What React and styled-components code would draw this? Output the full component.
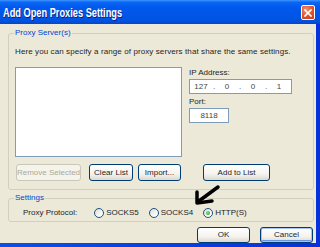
import React from 'react';
import styled, { createGlobalStyle } from 'styled-components';

const Global = createGlobalStyle`
  html, body { margin: 0; padding: 0; width: 320px; height: 247px; overflow: hidden; background: #0A3FD6; }
  #root { width: 320px; height: 247px; }
`;

const Window = styled.div`
  position: relative;
  width: 320px;
  height: 247px;
  display: flex;
  flex-direction: column;
  background: linear-gradient(90deg, #0B4FE6, #0831D9);
  font-family: "Liberation Sans", Arial, sans-serif;
  font-size: 8px;
  color: #1E1E1E;
`;

const TitleBar = styled.div`
  height: 24px;
  flex: none;
  display: flex;
  align-items: center;
  justify-content: space-between;
  padding: 0 5px 0 3px;
  background: linear-gradient(180deg, #3D95FF 0%, #0A66F2 10%, #0058EE 30%, #0055E5 70%, #0052E0 88%, #0A44C8 100%);
`;

const TitleText = styled.span`
  display: inline-block;
  color: #fff;
  font-weight: bold;
  font-size: 12px;
  transform: scaleX(0.77);
  transform-origin: left center;
  text-shadow: 1px 1px 0 #0A1E80;
  white-space: nowrap;
  margin-top: 1px;
`;

const CloseButton = styled.div`
  width: 14px;
  height: 15px;
  box-sizing: border-box;
  border: 1px solid #fff;
  border-radius: 2px;
  background: radial-gradient(circle at 35% 30%, #F0957A 0%, #E25A35 45%, #C13B14 100%);
  display: flex;
  align-items: center;
  justify-content: center;
  margin-top: 1px;
`;

const Body = styled.div`
  flex: 1;
  margin: 0 4px 4px 0;
  background: #ECE9D8;
  padding: 0 2px 0 8px;
  display: flex;
  flex-direction: column;
`;

const Group = styled.fieldset`
  margin: ${(p) => p.$top}px 0 0 0;
  padding: ${(p) => p.$pt}px 0 ${(p) => p.$pb}px 6px;
  border: 1px solid #D0D0BF;
  border-radius: 3px;
  min-width: 0;
`;

const Legend = styled.legend`
  padding: 0 1px;
  margin-left: -1px;
  color: #0046D5;
  line-height: 10px;
  font-size: 8px;
`;

const Desc = styled.div`
  line-height: 10px;
  white-space: nowrap;
  letter-spacing: 0.1px;
`;

const MainRow = styled.div`
  display: flex;
  margin-top: 10px;
  gap: 7px;
`;

const ListBox = styled.div`
  width: 167px;
  height: 90px;
  box-sizing: border-box;
  border: 1px solid #7F9DB9;
  background: #fff;
`;

const SideCol = styled.div`
  display: flex;
  flex-direction: column;
  padding-top: 1px;
`;

const Label = styled.div`
  line-height: 10px;
  margin-top: ${(p) => p.$mt || 0}px;
`;

const TextBox = styled.div`
  width: ${(p) => p.$w}px;
  height: 15px;
  box-sizing: border-box;
  margin-top: 1px;
  border: 1px solid #7F9DB9;
  background: #fff;
  display: flex;
  align-items: center;
  color: #444;
  line-height: 10px;
`;

const IpPart = styled.span`
  width: ${(p) => p.$w}px;
  text-align: center;
`;

const ButtonRow = styled.div`
  display: flex;
  margin-top: 7px;
  padding-left: 1px;
`;

const Button = styled.div`
  width: ${(p) => p.$w}px;
  height: ${(p) => p.$h || 17}px;
  margin-left: ${(p) => p.$ml || 0}px;
  box-sizing: border-box;
  border: 1px solid ${(p) => (p.$disabled ? '#C9C7BA' : '#003C74')};
  border-radius: 3px;
  background: ${(p) => (p.$disabled ? '#F5F4EA' : 'linear-gradient(180deg, #FFFFFF 0%, #F4F3EE 60%, #DCD9CD 100%)')};
  color: ${(p) => (p.$disabled ? '#ACA899' : '#1E1E1E')};
  box-shadow: ${(p) => (p.$default ? 'inset 0 0 0 1px #A8C6F5, inset 0 -1px 0 1px #6A93E6' : 'none')};
  display: flex;
  align-items: center;
  justify-content: center;
  line-height: 10px;
  white-space: nowrap;
`;

const ProtoRow = styled.div`
  display: flex;
  align-items: center;
  padding-left: 8px;
  line-height: 10px;
`;

const Radio = styled.span`
  display: flex;
  align-items: center;
  margin-left: ${(p) => p.$ml}px;
`;

const RadioCircle = styled.span`
  width: 10px;
  height: 10px;
  box-sizing: border-box;
  border-radius: 50%;
  border: 1px solid #1C5180;
  background: linear-gradient(135deg, #DCDCD7 0%, #FFFFFF 80%);
  margin-right: 2px;
  display: flex;
  align-items: center;
  justify-content: center;
  &::after {
    content: '';
    display: ${(p) => (p.$checked ? 'block' : 'none')};
    width: 4px;
    height: 4px;
    border-radius: 50%;
    background: radial-gradient(circle at 40% 35%, #7BE07B, #21A121);
  }
`;

const Footer = styled.div`
  display: flex;
  justify-content: flex-end;
  gap: 10px;
  margin-top: 5px;
  padding-right: 1px;
`;

const Scribble = styled.svg`
  position: absolute;
  left: 190px;
  top: 184px;
  pointer-events: none;
`;

export default function App() {
  return (
    <>
      <Global />
      <Window>
        <TitleBar>
          <TitleText>Add Open Proxies Settings</TitleText>
          <CloseButton>
            <svg width="8" height="8" viewBox="0 0 8 8">
              <path d="M1 1 L7 7 M7 1 L1 7" stroke="#fff" strokeWidth="1.6" strokeLinecap="square" />
            </svg>
          </CloseButton>
        </TitleBar>
        <Body>
          <Group $top={4} $pt={9} $pb={8}>
            <Legend>Proxy Server(s)</Legend>
            <Desc>Here you can specify a range of proxy servers that share the same settings.</Desc>
            <MainRow>
              <ListBox />
              <SideCol>
                <Label>IP Address:</Label>
                <TextBox $w={103}>
                  <IpPart $w={22}>127</IpPart>
                  <IpPart $w={4}>.</IpPart>
                  <IpPart $w={22}>0</IpPart>
                  <IpPart $w={4}>.</IpPart>
                  <IpPart $w={22}>0</IpPart>
                  <IpPart $w={4}>.</IpPart>
                  <IpPart $w={22}>1</IpPart>
                </TextBox>
                <Label $mt={3}>Port:</Label>
                <TextBox $w={40}>
                  <IpPart $w={38}>8118</IpPart>
                </TextBox>
              </SideCol>
            </MainRow>
            <ButtonRow>
              <Button $w={65} $disabled>Remove Selected</Button>
              <Button $w={44} $ml={8}>Clear List</Button>
              <Button $w={43} $ml={5}>Import...</Button>
              <Button $w={67} $ml={22}>Add to List</Button>
            </ButtonRow>
          </Group>
          <Group $top={3} $pt={5} $pb={3}>
            <Legend>Settings</Legend>
            <ProtoRow>
              <span>Proxy Protocol:</span>
              <Radio $ml={17}><RadioCircle />SOCKS5</Radio>
              <Radio $ml={10}><RadioCircle />SOCKS4</Radio>
              <Radio $ml={10}><RadioCircle $checked />HTTP(S)</Radio>
            </ProtoRow>
          </Group>
          <Footer>
            <Button $w={53} $h={16}>OK</Button>
            <Button $w={53} $h={16} $default>Cancel</Button>
          </Footer>
        </Body>
        <Scribble width="36" height="24" viewBox="0 0 36 24">
          <path d="M28 3 L9 17" stroke="#000" strokeWidth="3.5" strokeLinecap="round" fill="none" />
          <path d="M7 8 L7 19 L22 17" stroke="#000" strokeWidth="3.5" strokeLinecap="round" strokeLinejoin="round" fill="none" />
        </Scribble>
      </Window>
    </>
  );
}
